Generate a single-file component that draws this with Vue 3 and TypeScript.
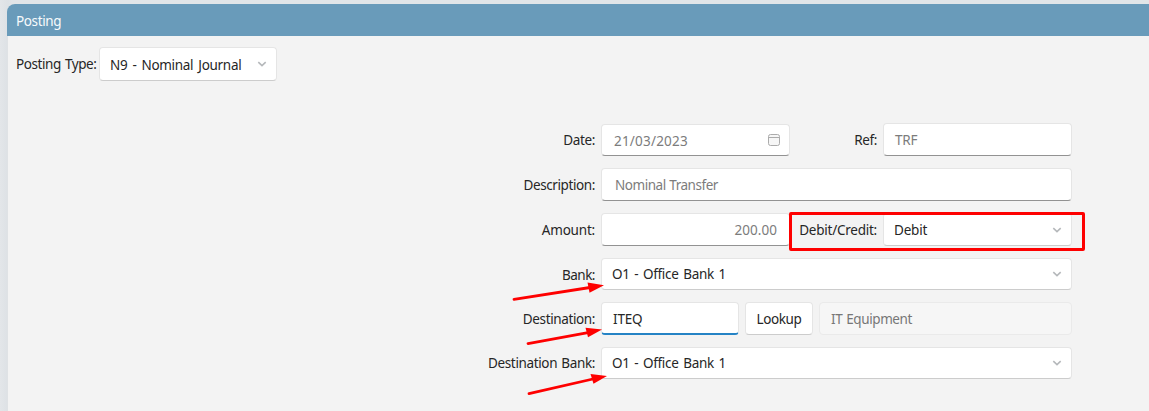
<script setup lang="ts">
interface Arrow {
  line: [number, number, number, number]
  head: string
}

const postingType = 'N9 - Nominal Journal'
const bank = 'O1 - Office Bank 1'

const arrows: Arrow[] = [
  { line: [514, 299.3, 590, 287.5], head: '587.5,282.5 604,285.3 589.5,292.7' },
  { line: [528, 343.6, 588, 332.6], head: '585.5,327.7 602,329.6 588,337.2' },
  { line: [529, 393.6, 593, 379], head: '590.5,374 607,376 593.5,383.7' },
]
</script>

<template>
  <main class="page">
    <section class="panel">
      <header class="bar"><span class="t-title">Posting</span></header>

      <div class="type-row">
        <label class="t-type">Posting Type:</label>
        <div class="field select type-select">
          <span class="t-journal">{{ postingType }}</span>
          <svg class="chev" viewBox="0 0 10 6"><path d="M1.3 1.2 L5 4.6 L8.7 1.2" /></svg>
        </div>
      </div>

      <form class="form" @submit.prevent>
        <div class="row">
          <label class="t-date">Date:</label>
          <div class="field input half date">
            <span class="t-dateval">21/03/2023</span>
            <svg class="cal" viewBox="0 0 12 12">
              <rect x="0.5" y="0.5" width="11" height="11" rx="2" />
              <path d="M0.5 3.5 H11.5" />
            </svg>
          </div>
          <label class="second t-ref">Ref:</label>
          <div class="field input half"><span class="t-trf">TRF</span></div>
        </div>

        <div class="row">
          <label class="t-desc">Description:</label>
          <div class="field input wide desc"><span class="t-nominal">Nominal Transfer</span></div>
        </div>

        <div class="row">
          <label class="t-amount">Amount:</label>
          <div class="field input half amount"><span class="t-value">200.00</span></div>
          <label class="second t-dc">Debit/Credit:</label>
          <div class="field select half debit">
            <span class="t-debit">Debit</span>
            <svg class="chev" viewBox="0 0 10 6"><path d="M1.3 1.2 L5 4.6 L8.7 1.2" /></svg>
          </div>
        </div>

        <div class="row short">
          <label class="t-bank">Bank:</label>
          <div class="field select wide">
            <span class="t-office">{{ bank }}</span>
            <svg class="chev" viewBox="0 0 10 6"><path d="M1.3 1.2 L5 4.6 L8.7 1.2" /></svg>
          </div>
        </div>

        <div class="row">
          <label class="t-dest">Destination:</label>
          <div class="field focused"><span class="t-iteq">ITEQ</span></div>
          <button type="button" class="field lookup"><span class="t-lookup">Lookup</span></button>
          <div class="field disabled"><span class="t-equip">IT Equipment</span></div>
        </div>

        <div class="row short">
          <label class="t-destbank">Destination Bank:</label>
          <div class="field select wide">
            <span class="t-office">{{ bank }}</span>
            <svg class="chev" viewBox="0 0 10 6"><path d="M1.3 1.2 L5 4.6 L8.7 1.2" /></svg>
          </div>
        </div>
      </form>
    </section>

    <svg class="marks" viewBox="0 0 1149 411">
      <rect x="790.5" y="213.5" width="293" height="36" rx="0.5" />
      <g v-for="(a, i) in arrows" :key="i">
        <line :x1="a.line[0]" :y1="a.line[1]" :x2="a.line[2]" :y2="a.line[3]" />
        <polygon :points="a.head" />
      </g>
    </svg>
  </main>
</template>

<style>
body {
  margin: 0;
  overflow: hidden;
}
</style>

<style scoped>
.page {
  position: relative;
  box-sizing: border-box;
  width: 1149px;
  height: 411px;
  padding: 4px 0 0 7px;
  background: linear-gradient(90deg, #e3e6e9 0, #dde1e5 8px, #e1e5e8 12px);
  font-family: 'Noto Sans', 'Open Sans', sans-serif;
  font-size: 13.5px;
  line-height: 20px;
  color: #262626;
  overflow: hidden;
}
.panel {
  height: 407px;
  background: linear-gradient(90deg, #dfe2e5 1px, #f3f3f3 1px);
  border-radius: 8px 0 0 0;
  overflow: hidden;
}
.bar {
  box-sizing: border-box;
  height: 32px;
  padding: 7px 0 0 9px;
  background: #699bba;
  color: #f7fafc;
}
span,
label {
  display: inline-block;
  white-space: nowrap;
}
.type-row {
  display: flex;
  align-items: center;
  height: 34px;
  margin-top: 11px;
  padding-left: 9px;
}
.type-row label {
  width: 83px;
}
.field {
  box-sizing: border-box;
  display: flex;
  align-items: center;
  flex: none;
  height: 100%;
  margin: 0;
  padding: 0 0 0 10px;
  border: 1px solid #e5e5e5;
  border-radius: 4px;
  background: #fff;
  font: inherit;
  color: inherit;
}
.select {
  justify-content: space-between;
  padding-right: 9px;
  border-bottom-color: #cccccc;
}
.type-select {
  width: 178px;
}
.input {
  padding-left: 11px;
  border-bottom-color: #929292;
  color: #7c7c7c;
}
.chev {
  width: 10px;
  height: 6px;
}
.chev path {
  fill: none;
  stroke: #b5b8bb;
  stroke-width: 1.6;
}
.form {
  display: flex;
  flex-direction: column;
  gap: 12px;
  margin-top: 42px;
}
.row {
  display: flex;
  align-items: center;
  height: 33px;
}
.row.short {
  height: 32px;
}
.row > label {
  flex: none;
  width: 588px;
  margin-right: 6px;
  text-align: right;
}
.row > label.second {
  width: 87px;
}
.half {
  width: 189px;
}
.wide {
  width: 471px;
}
.date {
  height: 32px;
  align-self: flex-end;
  justify-content: space-between;
  padding: 1px 9px 0 12px;
}
.cal {
  width: 12px;
  height: 12px;
  margin-bottom: 1px;
}
.cal rect {
  fill: #f6f6f6;
  stroke: #ababab;
}
.cal path {
  stroke: #ababab;
}
.desc {
  padding-left: 13px;
}
.amount {
  justify-content: flex-end;
  padding-right: 12px;
}
.focused {
  width: 138px;
  padding: 1px 0 0 11px;
  border-bottom: 2px solid #2583c5;
}
.lookup {
  width: 68px;
  margin-left: 6px;
  justify-content: center;
  padding: 0;
  border-bottom-color: #cccccc;
}
.disabled {
  width: 253px;
  margin-left: 6px;
  padding-left: 11px;
  border-color: #eaeaea;
  background: #f6f6f6;
  color: #777;
}
.t-title {
  letter-spacing: -0.38px;
}
.t-type {
  letter-spacing: -0.42px;
  word-spacing: 1px;
}
.t-journal {
  padding-top: 2px;
  letter-spacing: -0.3px;
  word-spacing: 1.8px;
}
.t-office {
  letter-spacing: -0.3px;
  word-spacing: 1.4px;
}
.t-date,
.t-ref,
.t-dest {
  letter-spacing: -0.38px;
}
.t-desc {
  letter-spacing: -0.4px;
}
.t-amount {
  letter-spacing: -0.2px;
}
.t-dc {
  letter-spacing: -0.24px;
}
.t-bank {
  padding-top: 2px;
  letter-spacing: -0.5px;
}
.t-destbank {
  letter-spacing: -0.36px;
  word-spacing: 1px;
}
.t-dateval {
  letter-spacing: 0.2px;
}
.t-nominal {
  letter-spacing: -0.47px;
  word-spacing: 0.6px;
}
.t-trf,
.t-debit {
  letter-spacing: -0.2px;
}
.t-value {
  letter-spacing: 0.05px;
}
.t-iteq {
  letter-spacing: -0.2px;
}
.t-lookup {
  letter-spacing: -0.35px;
}
.t-equip {
  letter-spacing: -0.4px;
  word-spacing: 0.8px;
}
.marks {
  position: absolute;
  inset: 0;
  width: 1149px;
  height: 411px;
  pointer-events: none;
}
.marks rect {
  fill: none;
  stroke: #fe0000;
  stroke-width: 3;
}
.marks line {
  stroke: #fe0000;
  stroke-width: 2.8;
  stroke-linecap: round;
}
.marks polygon {
  fill: #fe0000;
}
</style>
